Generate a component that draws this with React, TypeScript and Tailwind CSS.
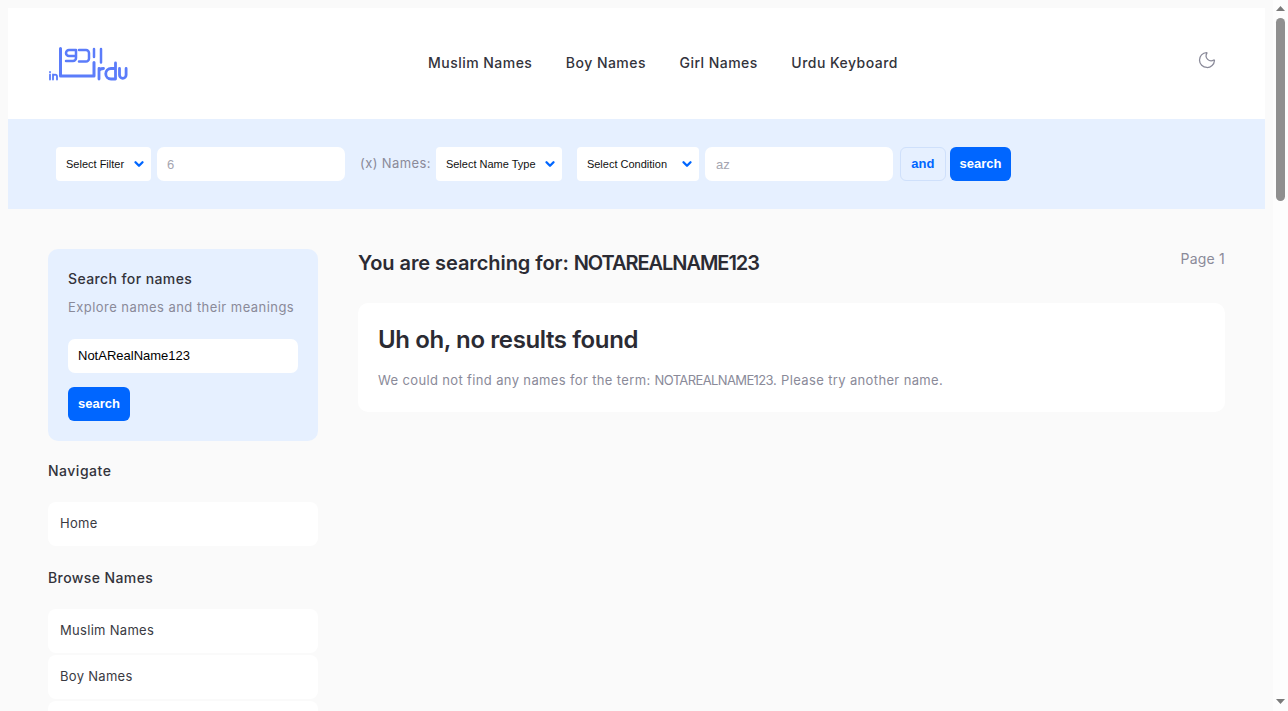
import { Moon, ChevronDown } from "lucide-react";

const poppins = "font-['Inter',sans-serif]";
const arial = "font-['Liberation_Sans',Arial,sans-serif]";

function Logo() {
  return (
    <svg width="82" height="36" viewBox="0 0 82 36" fill="none" stroke="#5b7cfa" strokeWidth="2.5" strokeLinecap="round" strokeLinejoin="round">
      {/* frame */}
      <path d="M12.500 2.500V30H46V16.500" strokeWidth="3" />
      {/* urdu letterforms */}
      <path d="M28 10h-7a3 3 0 0 1 0-6h7v8a3 3 0 0 1-3 3h-7" />
      <path d="M31 4h7a3 3 0 0 1 3 3v5.500a3 3 0 0 1-3 3h-7" />
      <path d="M46 3v8M53 3v13.500" />
      {/* in */}
      <path d="M2 28.500v5M2 26v.2M5 33.500v-5M5 30.500c0-2.500 4-2.500 4 0v3" strokeWidth="1.800" />
      {/* rdu */}
      <path d="M51 33V22.500M51 25.500c0-2.500 2-3 4.500-3" strokeWidth="2.800" />
      <path d="M67.500 17v16h-4.500a5 5 0 0 1 0-10.500h4.500" strokeWidth="2.800" />
      <path d="M71.500 22.500V29a3.300 3.300 0 0 0 6.600 0v-6.500" strokeWidth="2.800" />
    </svg>
  );
}

function Select({ label, className }: { label: string; className: string }) {
  return (
    <div className={`relative h-[34px] ${className}`}>
      <select className={`h-full w-full appearance-none rounded-[4px] bg-white pl-[10px] text-[11px] text-[#111] ${arial}`}>
        <option>{label}</option>
      </select>
      <ChevronDown size={14} strokeWidth={4} className="pointer-events-none absolute right-[5px] top-[10px] text-[#0066ff]" />
    </div>
  );
}

function SideLink({ label }: { label: string }) {
  return (
    <a className="flex h-[44px] items-center rounded-lg bg-white px-3 text-[13px] tracking-[0.3px] text-[#3a3a42]">{label}</a>
  );
}

function Scrollbar() {
  return (
    <div className="fixed inset-y-0 right-0 flex w-[15px] flex-col items-center bg-[#fdfdfd]">
      <svg width="9" height="5" viewBox="0 0 9 5" className="mt-[6px] shrink-0"><path d="M4.500 0L9 5H0z" fill="#7a7a7a" /></svg>
      <div className="mt-[7px] h-[183px] w-[9px] rounded-[5px] bg-[#8f8f8f]" />
      <svg width="9" height="5" viewBox="0 0 9 5" className="mb-[7px] mt-auto shrink-0"><path d="M0 0h9L4.500 5z" fill="#7a7a7a" /></svg>
    </div>
  );
}

export default function App() {
  return (
    <div className={`min-h-[2630px] bg-[#fafafa] p-2 pr-[23px] ${poppins}`}>
      <header className="flex h-[111px] items-center bg-white pl-[40px] pr-[48px]">
        <Logo />
        <nav className="mb-[2px] ml-[298px] flex gap-[33.5px] text-[14px] font-medium tracking-[0.47px] text-[#33333b]">
          <a>Muslim Names</a>
          <a>Boy Names</a>
          <a>Girl Names</a>
          <a>Urdu Keyboard</a>
        </nav>
        <Moon size={20} strokeWidth={1.5} className="mb-[7px] ml-auto text-[#8a8a99]" />
      </header>

      <div className="flex h-[90px] items-center bg-[#e6f0ff] pl-[48px]">
        <Select label="Select Filter" className="w-[95px]" />
        <input placeholder="6" className={`ml-[6px] h-[34px] w-[188px] rounded-[7px] bg-white px-[10px] text-[13px] placeholder:text-[#a5a5b0] ${arial}`} />
        <span className="ml-[15px] text-[13px] tracking-[0.4px] text-[#8a8a99]">(x) Names:</span>
        <Select label="Select Name Type" className="ml-[5px] w-[126px]" />
        <Select label="Select Condition" className="ml-[15px] w-[122px]" />
        <input placeholder="az" className={`ml-[6px] h-[34px] w-[188px] rounded-[7px] bg-white px-[11px] text-[13px] placeholder:text-[#a5a5b0] ${arial}`} />
        <button className={`ml-[7px] h-[34px] w-[46px] rounded-md border border-[#cfe0fb] bg-[#e6f0ff] text-[13px] font-bold text-[#0066ff] ${arial}`}>and</button>
        <button className={`ml-1 h-[34px] w-[61px] rounded-md bg-[#0066ff] text-[13px] font-bold text-white ${arial}`}>search</button>
      </div>

      <div className="flex gap-[40px] px-[40px] pt-[40px]">
        <aside className="w-[270px] shrink-0">
          <div className="flex h-[192px] flex-col rounded-[10px] bg-[#e6f0ff] px-5 pt-[20px]">
            <h3 className="text-[14px] font-medium leading-5 tracking-[0.4px] text-[#33333b]">Search for names</h3>
            <p className="mt-[8px] whitespace-nowrap text-[13px] leading-5 tracking-[0.45px] text-[#8a8a99]">Explore names and their meanings</p>
            <input defaultValue="NotARealName123" className={`mt-[22px] h-[34px] rounded-[7px] bg-white px-[10px] pb-[2px] text-[13px] text-black ${arial}`} />
            <button className={`mt-[14px] h-[34px] w-[62px] rounded-md bg-[#0066ff] text-[13px] font-bold text-white ${arial}`}>search</button>
          </div>
          <h3 className="mt-[20px] text-[14px] font-medium leading-5 tracking-[0.5px] text-[#33333b]">Navigate</h3>
          <div className="mt-[21px]"><SideLink label="Home" /></div>
          <h3 className="mt-[22px] text-[14px] font-medium leading-5 tracking-[0.4px] text-[#33333b]">Browse Names</h3>
          <div className="mt-[21px] flex flex-col gap-[2px]">
            <SideLink label="Muslim Names" />
            <SideLink label="Boy Names" />
            <SideLink label="Girl Names" />
          </div>
        </aside>

        <main className="flex-1">
          <div className="flex h-[54px] items-start justify-between">
            <h1 className="text-[20px] font-semibold leading-7 tracking-[-0.07px] text-[#2b2b33]">
              You are searching for: <span className="tracking-[-1.05px]">NOTAREALNAME123</span>
            </h1>
            <span className="text-[14px] leading-5 tracking-[0.2px] text-[#8a8a99]">Page 1</span>
          </div>
          <div className="h-[109px] rounded-[10px] bg-white px-5 pt-[20px]">
            <h2 className="text-[24px] font-semibold leading-[34px] tracking-[-0.4px] text-[#2b2b33]">Uh oh, no results found</h2>
            <p className="mt-[13px] text-[13px] leading-5 tracking-[0.36px] text-[#8a8a99]">
              We could not find any names for the term: <span className="tracking-[-0.62px]">NOTAREALNAME123</span>. Please try another name.
            </p>
          </div>
        </main>
      </div>
      <Scrollbar />
    </div>
  );
}
